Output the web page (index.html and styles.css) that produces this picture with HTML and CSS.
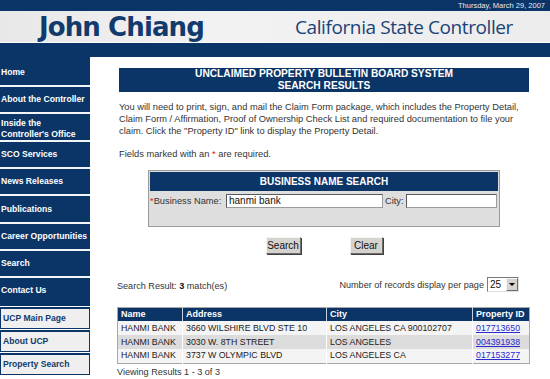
FILE: index.html
```html
<!DOCTYPE html>
<html>
<head>
<meta charset="utf-8">
<title>Unclaimed Property Search Results</title>
<link rel="stylesheet" href="styles.css">
</head>
<body>
<div class="topbar"><span class="date">Thursday, March 29, 2007</span></div>
<div class="banner">
  <span class="name">John Chiang</span>
  <span class="office">California State Controller</span>
</div>
<div class="strip"></div>
<div class="main">
  <nav class="side">
    <ul class="nav">
      <li>Home</li>
      <li>About the Controller</li>
      <li class="two">Inside the<br>Controller's Office</li>
      <li>SCO Services</li>
      <li>News Releases</li>
      <li class="tall">Publications</li>
      <li>Career Opportunities</li>
      <li>Search</li>
      <li>Contact Us</li>
    </ul>
    <ul class="ucp">
      <li>UCP Main Page</li>
      <li>About UCP</li>
      <li>Property Search</li>
    </ul>
  </nav>
  <div class="content">
    <div class="title">UNCLAIMED PROPERTY BULLETIN BOARD SYSTEM<br>SEARCH RESULTS</div>
    <p class="intro">You will need to print, sign, and mail the Claim Form package, which includes the Property Detail, Claim Form / Affirmation, Proof of Ownership Check List and required documentation to file your claim. Click the "Property ID" link to display the Property Detail.</p>
    <p class="req">Fields marked with an <span class="star">*</span> are required.</p>
    <div class="searchbox">
      <div class="sb-head">BUSINESS NAME SEARCH</div>
      <div class="sb-row">
        <label class="lbl-bn"><span class="star">*</span>Business Name:</label>
        <span class="field f-bn">hanmi bank</span>
        <label class="lbl-city">City:</label>
        <span class="field f-city"></span>
      </div>
    </div>
    <div class="buttons">
      <span class="btn b-search">Search</span>
      <span class="btn b-clear">Clear</span>
    </div>
    <div class="results">
      <div class="resbar">
        <span class="count">Search Result: <b>3</b> match(es)</span>
        <span class="perpage">Number of records display per page
          <span class="select"><span class="sel-val">25</span><span class="sel-btn"><span class="tri"></span></span></span>
        </span>
      </div>
      <table class="grid">
        <thead>
          <tr><th class="c1">Name</th><th class="c2">Address</th><th class="c3">City</th><th class="c4">Property ID</th></tr>
        </thead>
        <tbody>
          <tr><td>HANMI BANK</td><td>3660 WILSHIRE BLVD STE 10</td><td>LOS ANGELES CA 900102707</td><td><a href="#">017713650</a></td></tr>
          <tr class="alt"><td>HANMI BANK</td><td>3030 W. 8TH STREET</td><td>LOS ANGELES</td><td><a href="#">004391938</a></td></tr>
          <tr><td>HANMI BANK</td><td>3737 W OLYMPIC BLVD</td><td>LOS ANGELES CA</td><td><a href="#">017153277</a></td></tr>
        </tbody>
      </table>
      <div class="viewing">Viewing Results 1 - 3 of 3</div>
    </div>
  </div>
</div>
</body>
</html>
```

FILE: styles.css
```css
* { box-sizing: border-box; }
html, body { margin: 0; padding: 0; background: #fff; }
body {
  width: 550px;
  height: 379px;
  overflow: hidden;
  font-family: "Liberation Sans", Arial, sans-serif;
  font-size: 9.3px;
  color: #333;
}
.topbar {
  height: 11px;
  background: #0b3467;
  display: flex;
  justify-content: flex-end;
  align-items: center;
  padding-right: 5px;
}
.date { color: #e4e8ee; font-size: 7.5px; line-height: 11px; }
.banner {
  height: 32px;
  background: linear-gradient(90deg, #e8e8e8 0%, #f2f2f2 40%, #ececec 100%);
  border-bottom: 1px solid #fbfbfb;
  display: flex;
  align-items: center;
  justify-content: space-between;
  padding: 0 37px 0 39px;
}
.name {
  font-family: "DejaVu Sans", sans-serif;
  font-weight: bold;
  font-size: 26px;
  color: #123a6d;
  letter-spacing: -0.9px;
}
.office {
  font-family: "Open Sans", sans-serif;
  font-size: 19px;
  color: #1b4277;
  letter-spacing: -0.4px;
}
.strip { height: 14px; background: #0b3467; }
.main { display: flex; align-items: flex-start; }
.side { width: 90px; flex: none; }
.nav { list-style: none; margin: 0; padding: 2px 0 3px; background: #0b3467; }
.nav li {
  height: 26px;
  color: #fff;
  font-weight: bold;
  font-size: 8.6px;
  line-height: 25px;
  padding-top: 1px;
  padding-left: 1px;
  white-space: nowrap;
}
.nav li + li { height: 27px; border-top: 2px solid #f2f4f7; padding-top: 0; }
.nav li.tall { height: 28px; line-height: 26px; }
.nav li.two { height: 28px; line-height: 11px; padding-top: 4px; }
.ucp { list-style: none; margin: 0; padding: 0; }
.ucp li {
  margin-top: 1px;
  height: 22px;
  border: 1px solid #0b3467;
  border-top-width: 2px;
  background: #efefef;
  color: #123a6d;
  font-weight: bold;
  font-size: 8.6px;
  line-height: 19px;
  padding-left: 2px;
}
.content { flex: 1; margin-left: 1px; padding: 11px 22px 0 28px; }
.title {
  background: #0b3467;
  color: #fff;
  font-weight: bold;
  font-size: 10.2px;
  line-height: 12px;
  text-align: center;
  height: 24px;
}
.intro { margin: 9px 0 0; line-height: 12px; color: #333; }
.req { margin: 11px 0 0; line-height: 12px; color: #333; }
.star { color: #e02020; }
.searchbox {
  margin: 10px 0 0 29px;
  width: 352px;
  height: 57px;
  border: 1px solid #9a9a9a;
  padding: 1px;
  background: #dedede;
}
.sb-head {
  height: 19px;
  background: #0b3467;
  color: #fff;
  font-weight: bold;
  font-size: 10px;
  line-height: 19px;
  text-align: center;
}
.sb-row { display: flex; align-items: center; margin-top: 3px; height: 14px; }
.lbl-bn { width: 76px; flex: none; color: #333; white-space: nowrap; font-size: 9.3px; }
.lbl-city { width: 21px; margin-left: 2px; flex: none; color: #333; }
.field {
  height: 14px;
  background: #fff;
  border: 1px solid #9a9a9a;
  border-top-color: #5a5a5a;
  border-left-color: #5a5a5a;
  font-size: 10px;
  line-height: 12px;
  padding-left: 2px;
  color: #111;
}
.f-bn { width: 157px; }
.f-city { width: 91px; }
.buttons { display: flex; justify-content: center; gap: 49px; margin-top: 10px; }
.btn {
  height: 17px;
  background: #d6d3ce;
  border: 1px solid #f4f4f4;
  border-right-color: #6e6e6e;
  border-bottom-color: #6e6e6e;
  box-shadow: 1px 1px 0 #404040;
  font-size: 10px;
  line-height: 15px;
  text-align: center;
  color: #111;
}
.b-search { width: 35px; }
.b-clear { width: 33px; }
.results { margin: 22px 0 0 -2px; width: 412px; }
.resbar { display: flex; justify-content: space-between; align-items: center; height: 17px; padding-right: 10px; }
.count { color: #333; padding-top: 3px; font-size: 9.1px; }
.count b { font-weight: bold; color: #111; }
.perpage { display: flex; align-items: center; gap: 3px; color: #333; font-size: 9.1px; }
.select {
  display: flex;
  width: 32px;
  height: 15px;
  background: #fff;
  border: 1px solid #7a7a7a;
  border-right-color: #e0e0e0;
  border-bottom-color: #e0e0e0;
}
.sel-val { flex: 1; font-size: 10px; line-height: 13px; padding-left: 2px; color: #111; }
.sel-btn {
  width: 12px;
  background: #d6d3ce;
  border: 1px solid #f4f4f4;
  border-right-color: #6e6e6e;
  border-bottom-color: #6e6e6e;
  display: flex;
  align-items: center;
  justify-content: center;
}
.tri { width: 0; height: 0; border-left: 3px solid transparent; border-right: 3px solid transparent; border-top: 3px solid #000; }
.grid {
  margin-top: 14px;
  width: 412px;
  border-collapse: collapse;
  border: 1px solid #a8a8a8;
  table-layout: fixed;
}
.grid th, .grid td {
  height: 14px;
  padding: 0 0 0 3px;
  text-align: left;
  white-space: nowrap;
  border-left: 1px solid #fff;
  font-size: 8.8px;
  line-height: 13px;
}
.grid th:first-child, .grid td:first-child { border-left: none; }
.grid th { background: #0b3467; color: #fff; font-weight: bold; height: 13px; border-left-color: #c8d0dc; font-size: 9px; }
.grid td { background: #f4f4f4; color: #222; }
.grid tr.alt td { background: #dcdcdc; }
.c1 { width: 65px; }
.c2 { width: 144px; }
.c3 { width: 146px; }
.c4 { width: 57px; }
.grid a { color: #2a2ad0; text-decoration: underline; }
.viewing { margin-top: 2px; line-height: 12px; color: #333; font-size: 9.1px; }
```
